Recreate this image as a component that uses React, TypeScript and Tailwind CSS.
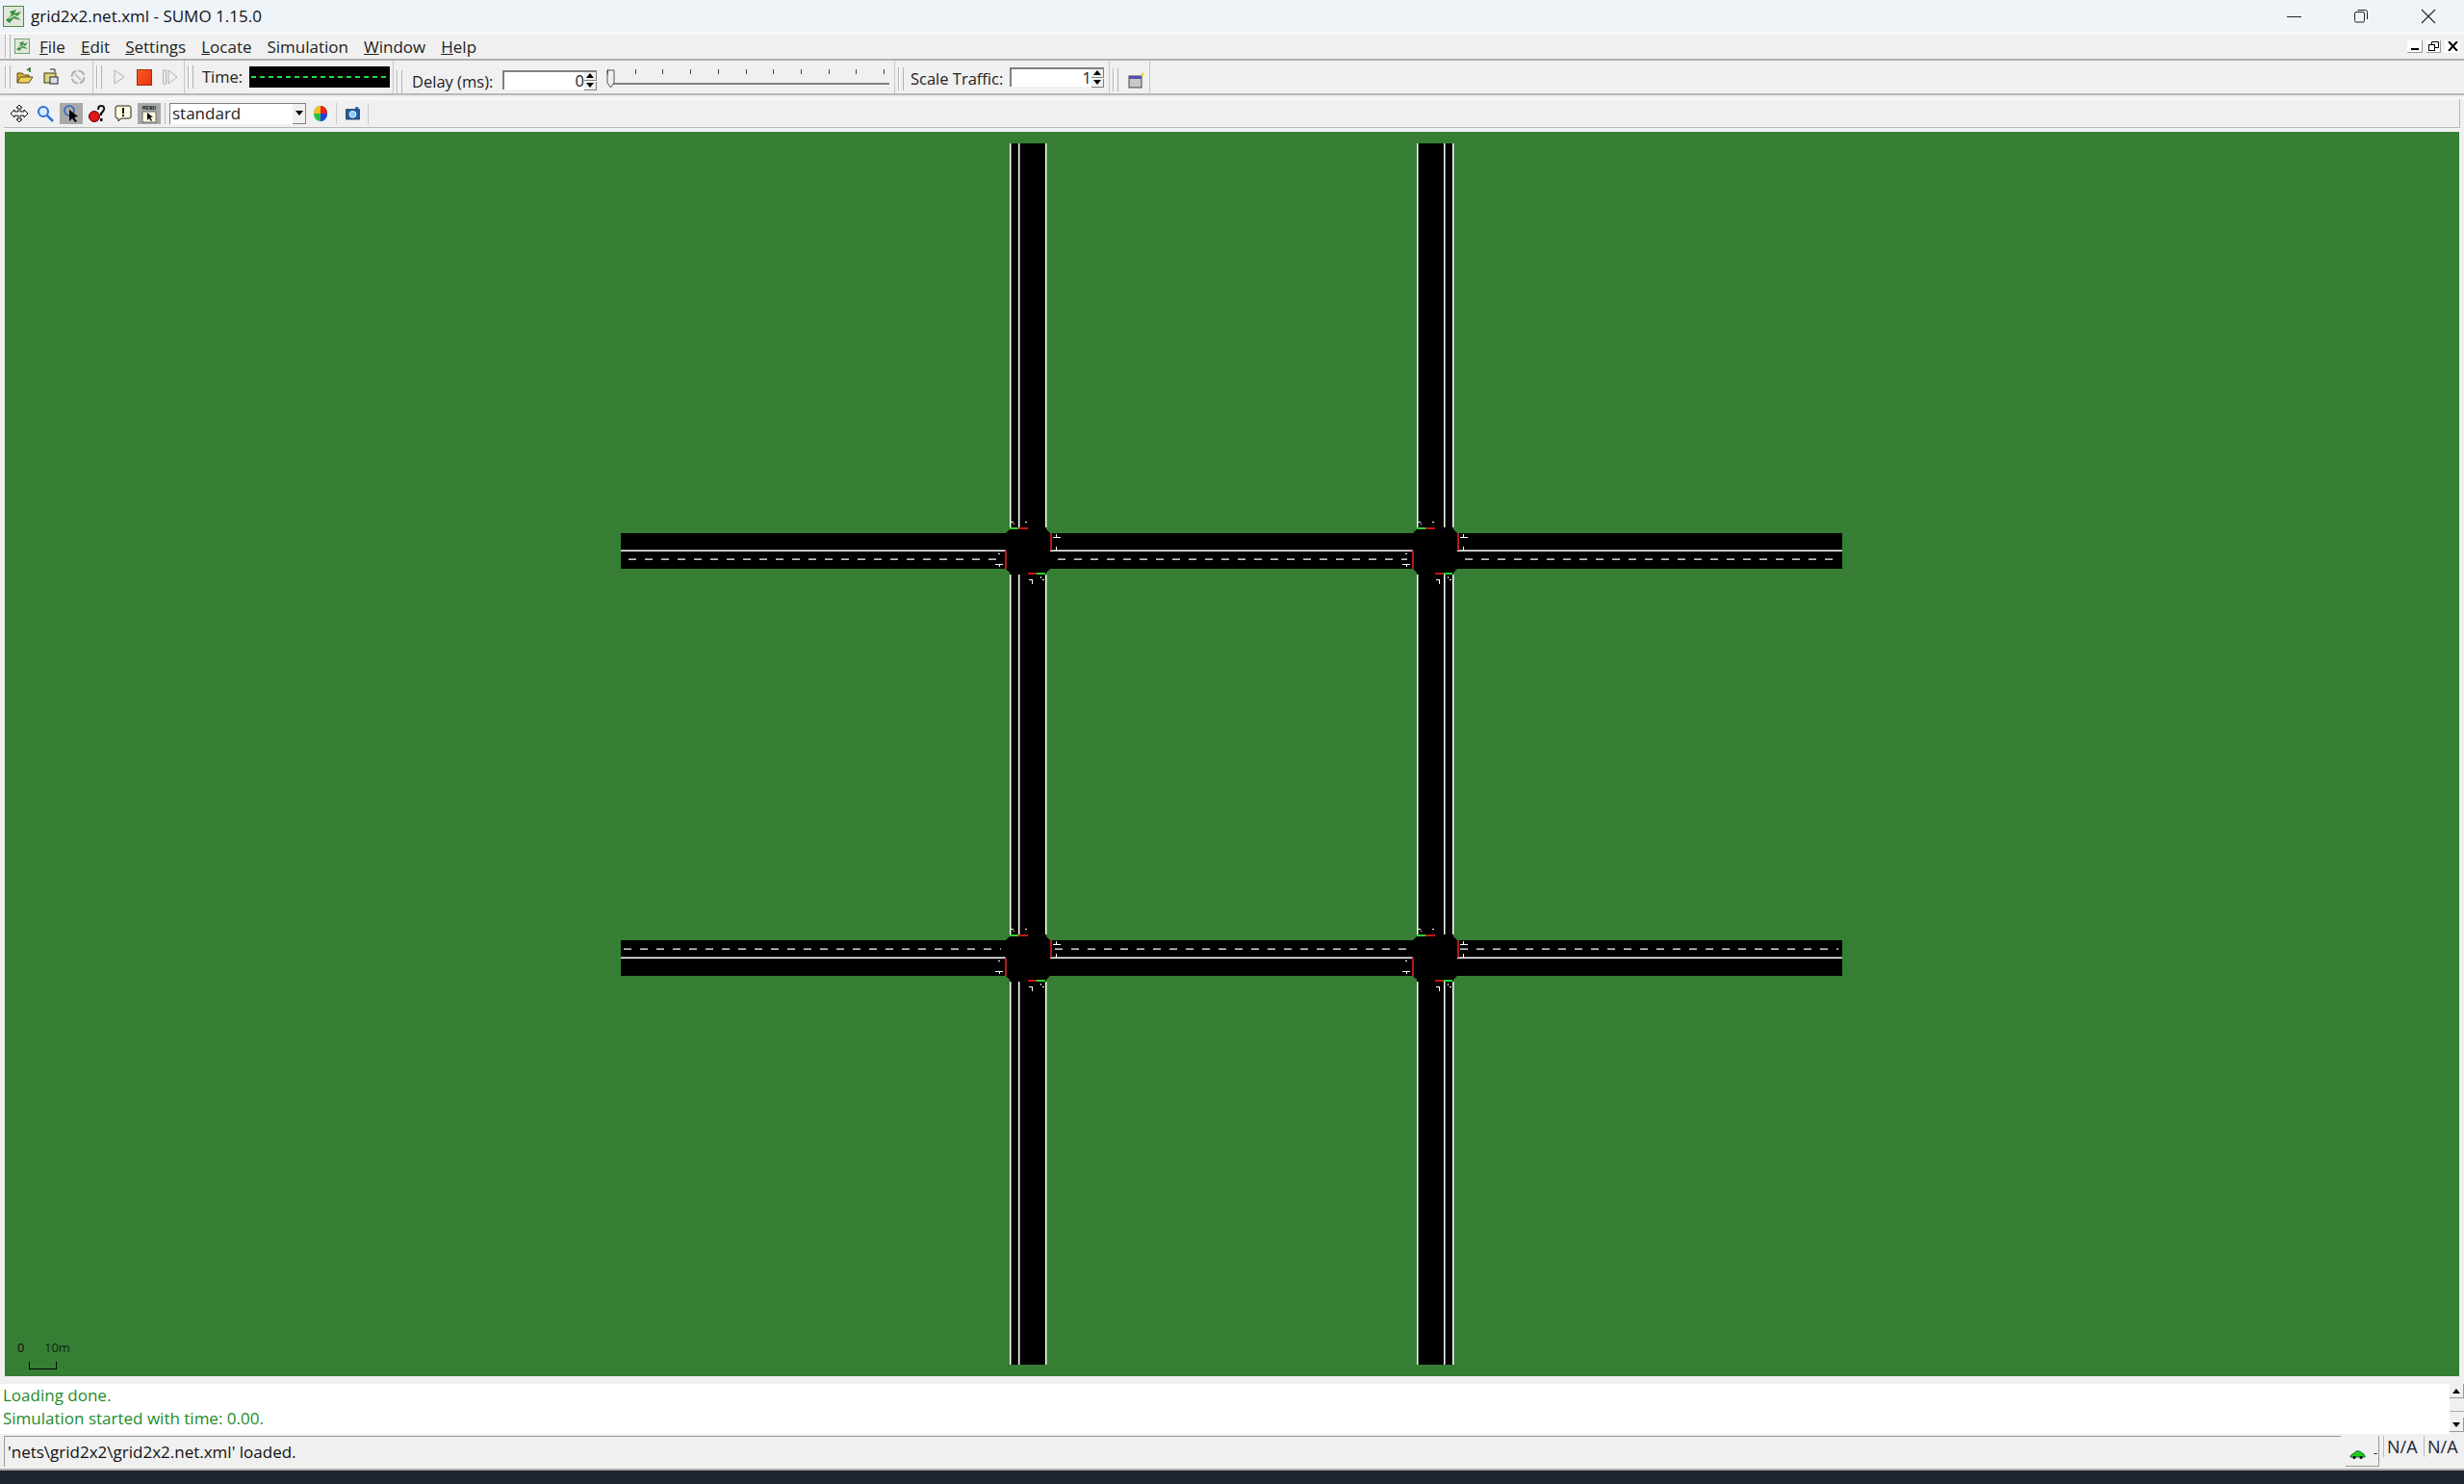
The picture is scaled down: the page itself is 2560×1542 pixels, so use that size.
import type { ReactNode } from "react";

const uiFont = { fontFamily: "'Open Sans', 'Noto Sans', sans-serif" };

const menus = [
  { key: "F", rest: "ile" },
  { key: "E", rest: "dit" },
  { key: "S", rest: "ettings" },
  { key: "L", rest: "ocate" },
  { key: "", rest: "Simulation" },
  { key: "W", rest: "indow" },
  { key: "H", rest: "elp" },
];

const ticks = [0, 1, 2, 3, 4, 5, 6, 7, 8, 9, 10];

function Grip() {
  return (
    <div className="mx-[3px] flex h-[24px] w-[6px] shrink-0 justify-between border-x border-[#b4b4b4]">
      <div className="h-full w-px bg-white" />
    </div>
  );
}

function Seg({ children, className = "" }: { children: ReactNode; className?: string }) {
  return (
    <div className={`flex shrink-0 items-center border-r border-[#c8c8c8] ${className}`}>
      {children}
    </div>
  );
}

function SumoIcon({ size = 22 }: { size?: number }) {
  return (
    <svg width={size} height={size} viewBox="0 0 22 22" className="shrink-0">
      <rect x="0.5" y="0.5" width="21" height="21" fill="#dfe8d8" stroke="#4f8a4f" />
      <path d="M3 15 L9 9 L7 6 L14 4 L12 8 L19 6 L15 11 L18 15 L11 13 L7 18 Z" fill="#3f8f45" />
      <path d="M6 13 L12 10 L16 12" stroke="#c8e0c0" strokeWidth="1.5" fill="none" />
    </svg>
  );
}

function Spinner() {
  return (
    <div className="flex w-[13px] shrink-0 flex-col gap-px">
      <div className="flex h-[9px] items-center justify-center border-r border-b border-[#808080] bg-[#f0f0f0]">
        <div className="h-0 w-0 border-x-[4px] border-b-[5px] border-x-transparent border-b-black" />
      </div>
      <div className="flex h-[9px] items-center justify-center border-r border-b border-[#808080] bg-[#f0f0f0]">
        <div className="h-0 w-0 border-x-[4px] border-t-[5px] border-x-transparent border-t-black" />
      </div>
    </div>
  );
}

function IconBox({ children, pressed = false }: { children: ReactNode; pressed?: boolean }) {
  return (
    <div className={`flex h-[22px] w-[24px] shrink-0 items-center justify-center ${pressed ? "bg-[#a8a8a8]" : ""}`}>
      <svg width="20" height="20" viewBox="0 0 20 20">
        {children}
      </svg>
    </div>
  );
}

function Junction({ x, y }: { x: number; y: number }) {
  // x,y = top-left of the junction block
  const w = 46;
  const h = 47;
  const c = 5;
  return (
    <polygon
      points={`${x + c},${y} ${x + w - c},${y} ${x + w},${y + c} ${x + w},${y + h - c} ${x + w - c},${y + h} ${x + c},${y + h} ${x},${y + h - c} ${x},${y + c}`}
      fill="#000"
    />
  );
}

function StopBars({ x, north, south, road }: { x: number; north: number; south: number; road: number }) {
  return (
    <g>
      <rect x={x + 4} y={north} width={9} height={2} fill="#2fd02f" />
      <rect x={x + 13} y={north} width={10} height={2} fill="#c01818" />
      <rect x={x + 23} y={south} width={9} height={2} fill="#c01818" />
      <rect x={x + 32} y={south} width={9} height={2} fill="#2fd02f" />
      <rect x={x - 1} y={road + 18} width={2} height={19} fill="#b01c1c" />
      <rect x={x + 46} y={road} width={2} height={18} fill="#b01c1c" />
    </g>
  );
}

function Arrows({ x, y }: { x: number; y: number }) {
  return (
    <g fill="#fff">
      <rect x={x + 5} y={y - 7} width={3} height={1} />
      <rect x={x + 8} y={y - 5} width={1} height={1} />
      <rect x={x + 20} y={y - 7} width={2} height={1} />
      <rect x={x + 27} y={y + 53} width={1} height={5} />
      <rect x={x + 24} y={y + 53} width={3} height={1} />
      <rect x={x + 36} y={y + 50} width={1} height={2} />
      <rect x={x + 38} y={y + 53} width={2} height={1} />
      <rect x={x - 8} y={y + 26} width={2} height={1} />
      <rect x={x - 11} y={y + 37} width={8} height={1} />
      <rect x={x - 7} y={y + 38} width={1} height={2} />
      <rect x={x + 49} y={y + 9} width={8} height={1} />
      <rect x={x + 52} y={y + 6} width={1} height={3} />
      <rect x={x + 52} y={y + 19} width={1} height={4} />
    </g>
  );
}

function DashRow({ y, from, to }: { y: number; from: number; to: number }) {
  return <line x1={from} y1={y} x2={to} y2={y} stroke="#fff" strokeWidth="1.25" strokeDasharray="8 9" />;
}

function Network() {
  return (
    <svg viewBox="5 137 2550 1293" className="block h-full w-full">
      {/* vertical roads */}
      <rect x="1049" y="149" width="38" height="1269" fill="#000" />
      <rect x="1472" y="149" width="38" height="1269" fill="#000" />
      {/* horizontal roads */}
      <rect x="645" y="554" width="1269" height="37" fill="#000" />
      <rect x="645" y="977" width="1269" height="37" fill="#000" />

      {/* road edges, vertical */}
      <g fill="#fff">
        {[1049, 1058, 1086, 1472, 1500, 1509].map((x) => (
          <g key={x}>
            <rect x={x} y="149" width="1.5" height="399" />
            <rect x={x} y="597" width="1.5" height="374" />
            <rect x={x} y="1020" width="1.5" height="398" />
          </g>
        ))}
      </g>

      {/* road dividers, horizontal */}
      <g fill="#fff">
        <rect x="645" y="571.5" width="400" height="1.5" />
        <rect x="1091" y="571.5" width="377" height="1.5" />
        <rect x="1514" y="571.5" width="400" height="1.5" />
        <rect x="645" y="994.5" width="400" height="1.5" />
        <rect x="1091" y="994.5" width="377" height="1.5" />
        <rect x="1514" y="994.5" width="400" height="1.5" />
      </g>
      <DashRow y={581} from={653} to={1040} />
      <DashRow y={581} from={1099} to={1462} />
      <DashRow y={581} from={1522} to={1910} />
      <DashRow y={986} from={648} to={1040} />
      <DashRow y={986} from={1096} to={1462} />
      <DashRow y={986} from={1517} to={1910} />

      <Junction x={1045} y={549} />
      <Junction x={1468} y={549} />
      <Junction x={1045} y={972} />
      <Junction x={1468} y={972} />
      <StopBars x={1045} north={548} south={595} road={554} />
      <StopBars x={1468} north={548} south={595} road={554} />
      <StopBars x={1045} north={971} south={1018} road={977} />
      <StopBars x={1468} north={971} south={1018} road={977} />
      <Arrows x={1045} y={549} />
      <Arrows x={1468} y={549} />
      <Arrows x={1045} y={972} />
      <Arrows x={1468} y={972} />
    </svg>
  );
}

export default function App() {
  return (
    <div className="flex h-[1542px] w-[2560px] flex-col overflow-hidden bg-[#f0f0f0] text-black" style={uiFont}>
      {/* window title */}
      <div className="flex h-[34px] shrink-0 items-center bg-[#eff4f9] pl-[3px]">
        <SumoIcon />
        <span className="ml-[7px] text-[17px] text-[#111]">grid2x2.net.xml - SUMO 1.15.0</span>
        <div className="ml-auto flex items-center pr-[2px]">
          <div className="flex w-[70px] justify-center">
            <div className="h-px w-[15px] bg-[#222]" />
          </div>
          <div className="flex w-[70px] justify-center">
            <svg width="16" height="16" viewBox="0 0 16 16" fill="none" stroke="#222">
              <rect x="1.5" y="3.5" width="10" height="10.5" rx="1.5" />
              <path d="M4.5 1.5 H12.5 A2 2 0 0 1 14.5 3.5 V11" />
            </svg>
          </div>
          <div className="flex w-[70px] justify-center">
            <svg width="16" height="16" viewBox="0 0 16 16" stroke="#222" strokeWidth="1.1">
              <path d="M1 1 L15 15 M15 1 L1 15" />
            </svg>
          </div>
        </div>
      </div>

      {/* menu bar */}
      <div className="flex h-[29px] shrink-0 items-center border-t border-b-2 border-t-white border-b-[#b0b0b0] pl-[2px]">
        <Grip />
        <div className="ml-px">
          <SumoIcon size={16} />
        </div>
        <div className="ml-[10px] flex gap-[16px] pt-[2px] text-[17px] text-[#222]">
          {menus.map((m) => (
            <span key={m.rest}>
              {m.key && <u>{m.key}</u>}
              {m.rest}
            </span>
          ))}
        </div>
        <div className="mr-[4px] ml-auto flex items-center gap-[4px]">
          <div className="flex h-[13px] w-[16px] items-end justify-center border-r border-b border-[#999] bg-white pb-[2px]">
            <div className="h-[2px] w-[8px] bg-black" />
          </div>
          <div className="flex h-[13px] w-[15px] items-center justify-center border-r border-b border-[#999] bg-white">
            <svg width="11" height="10" viewBox="0 0 11 10" fill="none" stroke="#000">
              <rect x="0.5" y="3.5" width="6" height="6" />
              <path d="M3.5 3 V0.5 H10.5 V6.5 H7" />
            </svg>
          </div>
          <div className="flex h-[13px] w-[16px] items-center justify-center bg-white">
            <svg width="11" height="10" viewBox="0 0 11 10" stroke="#000" strokeWidth="2">
              <path d="M1 0 L10 10 M10 0 L1 10" />
            </svg>
          </div>
        </div>
      </div>

      {/* simulation toolbar */}
      <div className="flex h-[36px] shrink-0 items-stretch border-b-2 border-[#b8b8b8] pl-[2px]">
        <Seg className="pr-[3px]">
          <Grip />
          <IconBox>
            <path d="M2 16 V6 H7 L9 8 H14 V10" fill="#e0b040" stroke="#5a4a10" />
            <path d="M2 16 L5 10 H18 L14 16 Z" fill="#f0d060" stroke="#5a4a10" />
            <path d="M12 3 L15 1 V5" fill="none" stroke="#1a6a1a" strokeWidth="1.5" />
          </IconBox>
          <div className="w-[3px]" />
          <IconBox>
            <rect x="3" y="6" width="12" height="10" fill="#e0d080" stroke="#3a3a10" />
            <rect x="9" y="10" width="8" height="7" fill="#d8e0e8" stroke="#222" />
            <path d="M9 2 H14 V5" fill="none" stroke="#222" />
          </IconBox>
          <div className="w-[4px]" />
          <IconBox>
            <circle cx="10" cy="10" r="6.5" fill="none" stroke="#b0b0b0" strokeWidth="2" strokeDasharray="8 2" />
            <path d="M7 7 L13 13" stroke="#c4c4c4" strokeWidth="2" />
          </IconBox>
        </Seg>
        <Seg>
          <Grip />
          <div className="flex w-[29px] justify-center">
            <svg width="14" height="18" viewBox="0 0 14 18" fill="none" stroke="#b0b0b0">
              <path d="M2 2 L12 9 L2 16 Z" />
            </svg>
          </div>
          <div className="flex w-[24px] justify-center">
            <div className="h-[17px] w-[16px] border border-[#a03010] bg-gradient-to-br from-[#ff5a20] to-[#e83010]" />
          </div>
          <div className="flex w-[29px] justify-center">
            <svg width="18" height="18" viewBox="0 0 18 18" fill="none" stroke="#b0b0b0">
              <rect x="1.5" y="2" width="3" height="14" />
              <path d="M7 2 L16 9 L7 16 Z" />
            </svg>
          </div>
        </Seg>
        <Seg className="pr-[3px]">
          <Grip />
          <span className="ml-[6px] w-[49px] text-[16.5px] text-[#222]">Time:</span>
          <div className="flex h-[22px] w-[146px] items-center bg-black px-[2px]">
            <div className="h-[2px] w-full bg-[repeating-linear-gradient(90deg,#22dd44_0,#22dd44_5px,transparent_5px,transparent_9px)]" />
          </div>
        </Seg>
        <Seg className="pt-[10px] pr-[5px]">
          <Grip />
          <span className="ml-[7px] w-[94px] text-[16.5px] whitespace-nowrap text-[#222]">Delay (ms):</span>
          <div className="mb-[4px] flex h-[20px] w-[98px] items-center justify-end border-t-2 border-l-2 border-[#808080] bg-white">
            <span className="text-[16.5px] text-[#222]">0</span>
            <Spinner />
          </div>
          <div className="relative ml-[7px] h-[26px] w-[297px]">
            <div className="absolute top-[14px] right-0 left-[5px] h-[2px] bg-[#808080]" />
            <svg width="9" height="20" viewBox="0 0 9 20" className="absolute top-0 left-[3px]">
              <path d="M1 1 H8 V14 L4.5 19 L1 14 Z" fill="#f0f0f0" stroke="#555" />
            </svg>
            {ticks.map((t) => (
              <div key={t} className="absolute top-0 h-[5px] w-px bg-[#444]" style={{ left: 4 + t * 28.7 }} />
            ))}
          </div>
        </Seg>
        <Seg className="pt-[4px] pr-[5px]">
          <Grip />
          <span className="ml-[4px] w-[103px] text-[16.5px] whitespace-nowrap text-[#222]">Scale Traffic:</span>
          <div className="mb-[4px] flex h-[20px] w-[98px] items-center justify-end border-t-2 border-l-2 border-[#808080] bg-white">
            <span className="text-[16.5px] text-[#222]">1</span>
            <Spinner />
          </div>
        </Seg>
        <Seg className="pt-[6px] pr-[3px]">
          <Grip />
          <svg width="20" height="20" viewBox="0 0 20 20" className="ml-[6px] shrink-0">
            <rect x="2" y="6" width="13" height="12" fill="#c8c8c8" stroke="#444" />
            <rect x="2" y="6" width="13" height="3" fill="#5050b0" />
            <path d="M16 1 L17 4 L19 4 L17 5 L16 8 L15 5 L13 4 L15 4 Z" fill="#f0d040" />
          </svg>
        </Seg>
      </div>

      {/* view toolbar */}
      <div className="mt-[3px] flex h-[31px] shrink-0 items-stretch border-t border-t-white px-[4px]">
        <div className="flex flex-1 items-center border-r border-b border-[#b8b8b8] pl-[4px]">
          <IconBox>
            <path d="M10 1 L13 4 H11 V8 H15 V6 L19 10 L15 14 V12 H11 V16 H13 L10 19 L7 16 H9 V12 H5 V14 L1 10 L5 6 V8 H9 V4 H7 Z" fill="#fff" stroke="#111" />
          </IconBox>
          <div className="w-[3px]" />
          <IconBox>
            <circle cx="8" cy="8" r="5" fill="#d8ecff" stroke="#2a70e0" strokeWidth="2" />
            <path d="M12 12 L18 18" stroke="#2a70e0" strokeWidth="2.5" />
          </IconBox>
          <div className="w-[3px]" />
          <IconBox pressed>
            <circle cx="8" cy="7" r="5" fill="none" stroke="#2a60c0" strokeWidth="1.5" />
            <path d="M8 6 L8 18 L11 15 L14 19 L16 18 L13 14 L17 13 Z" fill="#000" />
          </IconBox>
          <div className="w-[3px]" />
          <IconBox>
            <circle cx="7" cy="13" r="5.5" fill="#e01818" stroke="#600" />
            <path d="M11 6 Q11 2 14 2 Q18 2 17 6 Q16 8 14 10 V12" fill="none" stroke="#111" strokeWidth="2" />
            <rect x="13" y="15" width="2.5" height="3" fill="#111" />
          </IconBox>
          <div className="w-[3px]" />
          <IconBox>
            <path d="M4 2 H16 A2 2 0 0 1 18 4 V13 A2 2 0 0 1 16 15 H8 L5 18 V15 H4 A2 2 0 0 1 2 13 V4 A2 2 0 0 1 4 2 Z" fill="#fffbe0" stroke="#222" />
            <rect x="9" y="4" width="2" height="6" fill="#111" />
            <rect x="9" y="11" width="2" height="2" fill="#111" />
          </IconBox>
          <div className="w-[3px]" />
          <div className="flex h-[22px] w-[24px] shrink-0 items-center justify-center bg-[#a8a8a8]">
            <svg width="18" height="20" viewBox="0 0 18 20">
              <text x="9" y="6" textAnchor="middle" fontSize="6" fontFamily="'Liberation Mono', monospace" fontWeight="bold" fill="#222">
                MENU
              </text>
              <rect x="2" y="8" width="14" height="11" fill="#fffbe0" stroke="#666" />
              <path d="M7 9 L7 17 L9 15 L11 18 L12 17 L10 14 L13 14 Z" fill="#000" />
            </svg>
          </div>
          <div className="mx-[4px] h-[22px] w-px bg-[#c0c0c0]" />
          <div className="flex h-[22px] w-[142px] shrink-0 items-center justify-between border-t border-l border-[#808080] bg-white pl-[2px]">
            <span className="text-[17px] text-[#222]">standard</span>
            <div className="flex h-[21px] w-[14px] items-center justify-center border-r border-b border-[#808080] bg-[#f0f0f0]">
              <div className="h-0 w-0 border-x-[4px] border-t-[5px] border-x-transparent border-t-black" />
            </div>
          </div>
          <div className="ml-[6px] flex h-[20px] w-[17px] shrink-0 items-center justify-center">
            <svg width="16" height="18" viewBox="0 0 15 18">
              <ellipse cx="7.5" cy="9" rx="7" ry="8" fill="#22c040" />
              <path d="M7.5 9 L7.5 1 A7 8 0 0 1 14.5 9 Z" fill="#ee2020" />
              <path d="M7.5 9 L14.5 9 A7 8 0 0 1 7.5 17 Z" fill="#2040e0" />
              <path d="M7.5 9 L0.5 9 A7 8 0 0 1 7.5 1 Z" fill="#f0c020" />
            </svg>
          </div>
          <div className="ml-[8px] h-[22px] w-px bg-[#c8c8c8]" />
          <svg width="17" height="18" viewBox="0 0 20 18" className="ml-[8px] shrink-0">
            <rect x="2" y="4" width="16" height="12" fill="#2060b0" stroke="#123" />
            <rect x="13" y="1" width="4" height="3" fill="#2060b0" />
            <circle cx="10" cy="10" r="4" fill="#90c8f0" stroke="#fff" />
          </svg>
          <div className="ml-[7px] h-[22px] w-px bg-[#c8c8c8]" />
        </div>
      </div>

      {/* network view */}
      <div className="mt-[4px] h-[1293px] shrink-0 px-[5px]">
        <div className="relative h-full bg-[#367e33]">
          <Network />
          <div className="absolute bottom-[6px] left-[13px] h-[34px] w-[60px] text-[13px] leading-none text-[#111]">
            <span className="absolute top-[4px] left-0">0</span>
            <span className="absolute top-[4px] left-[28px] text-[#0d2a0d]">10m</span>
            <div className="absolute top-[25px] left-[12px] h-[8px] w-[29px] border-x border-b border-black" />
          </div>
        </div>
      </div>

      {/* message window */}
      <div className="mt-[8px] flex h-[52px] shrink-0 bg-white">
        <div className="flex flex-1 flex-col pl-[3px] text-[17px] leading-[24px] text-[#218c2a]">
          <span>Loading done.</span>
          <span>Simulation started with time: 0.00.</span>
        </div>
        <div className="flex w-[15px] flex-col justify-between bg-[#f0f0f0] pb-[2px]">
          <div className="flex h-[15px] items-center justify-center border-r border-b border-[#999]">
            <div className="h-0 w-0 border-x-[4px] border-b-[5px] border-x-transparent border-b-black" />
          </div>
          <div className="h-[7px] border-b border-[#aaa]" />
          <div className="flex h-[15px] items-center justify-center border-r border-b border-[#999]">
            <div className="h-0 w-0 border-x-[4px] border-t-[5px] border-x-transparent border-t-black" />
          </div>
        </div>
      </div>

      {/* status bar */}
      <div className="flex h-[38px] shrink-0 items-stretch border-b-2 border-[#a8a8a8] py-[2px] pr-[3px] pl-[4px]">
        <div className="flex flex-1 items-center border-t border-l border-[#999] pl-[3px] text-[17px] text-[#111]">
          'nets\grid2x2\grid2x2.net.xml' loaded.
        </div>
        <div className="ml-[5px] flex w-[35px] items-end justify-start gap-[8px] border-r border-b border-[#999] bg-[#f0f0f0] pb-[7px] pl-[4px]">
          <svg width="17" height="10" viewBox="0 0 17 10" className="shrink-0">
            <path d="M1 8 C1 5 4 5 5 4 C6 1 11 1 13 4 C15 4 16 6 16 8 Z" fill="#22cc11" stroke="#064" />
            <circle cx="5" cy="8.5" r="1.5" fill="#000" />
            <circle cx="12" cy="8.5" r="1.5" fill="#000" />
          </svg>
          <span className="text-[13px] leading-[14px] text-[#222]">-</span>
        </div>
        <div className="ml-[4px] flex h-[22px] w-[42px] items-center border-l border-[#bbb] pl-[3px] text-[18px] text-[#223]">
          N/A
        </div>
        <div className="flex h-[22px] w-[39px] items-center border-l border-[#bbb] pl-[3px] text-[18px] text-[#223]">
          N/A
        </div>
      </div>
      <div className="flex-1 bg-[#1f2530]" />
    </div>
  );
}
